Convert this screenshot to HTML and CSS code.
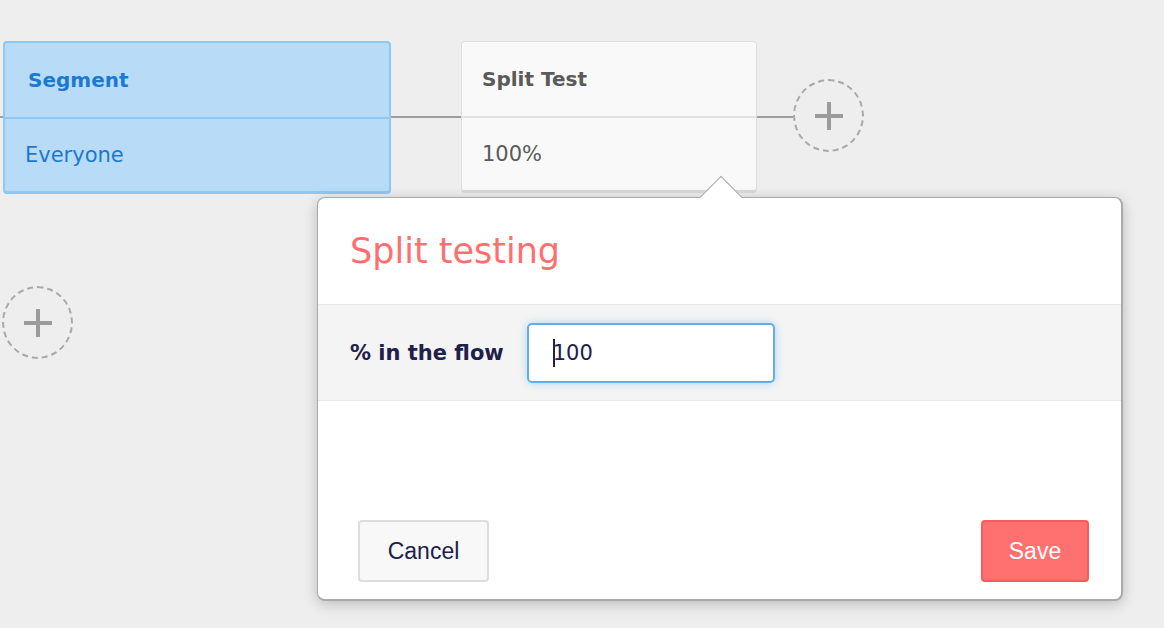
FILE: index.html
```html
<!DOCTYPE html>
<html>
<head>
<meta charset="utf-8">
<link rel="stylesheet" href="styles.css">
</head>
<body>
<div class="canvas">
  <div class="flow-row">
    <div class="line line-lead"></div>
    <div class="node node-segment">
      <div class="node-head">Segment</div>
      <div class="node-body">Everyone</div>
    </div>
    <div class="line line-mid"></div>
    <div class="node node-split">
      <div class="node-head">Split Test</div>
      <div class="node-body">100%</div>
    </div>
    <div class="line line-end"></div>
    <div class="add-btn add-btn-next">
      <svg viewBox="0 0 30 30" width="30" height="30"><path d="M15 1V29M1 15H29" stroke="#9b9b9b" stroke-width="4" fill="none"/></svg>
    </div>
  </div>
  <div class="add-btn add-btn-branch">
    <svg viewBox="0 0 30 30" width="30" height="30"><path d="M15 1V29M1 15H29" stroke="#9b9b9b" stroke-width="4" fill="none"/></svg>
  </div>

  <div class="popover">
    <div class="popover-arrow"></div>
    <div class="popover-title">Split testing</div>
    <div class="popover-field">
      <label class="field-label">% in the flow</label>
      <div class="field-input"><span class="caret"></span>100</div>
    </div>
    <div class="popover-footer">
      <button class="btn btn-cancel">Cancel</button>
      <button class="btn btn-save">Save</button>
    </div>
  </div>
</div>
</body>
</html>
```

FILE: styles.css
```css
html, body {
  margin: 0;
  padding: 0;
  background: #eeeeee;
  font-family: "DejaVu Sans", sans-serif;
}

.canvas {
  position: relative;
  width: 1164px;
  height: 628px;
  overflow: hidden;
}

.flow-row {
  display: flex;
  align-items: flex-start;
  padding-top: 41px;
}

.line {
  height: 2px;
  margin-top: 75px;
  background: #9d9d9d;
}
.line-lead { width: 3px; }
.line-mid { width: 70px; }
.line-end { width: 36px; }

.node {
  box-sizing: border-box;
  height: 153px;
  border-radius: 4px;
  display: flex;
  flex-direction: column;
}
.node-head {
  height: 74px;
  display: flex;
  align-items: center;
  font-weight: bold;
  font-size: 20px;
}
.node-body {
  flex: 1;
  display: flex;
  align-items: center;
  font-size: 21px;
}

.node-segment {
  width: 388px;
  background: #b8dcf7;
  border: 2px solid #8ec8f4;
  border-bottom-width: 3px;
  color: #1b79d1;
}
.node-segment .node-head {
  padding-left: 23px;
  border-bottom: 2px solid #8ec8f4;
}
.node-segment .node-body { padding-left: 20px; }

.node-split {
  width: 296px;
  height: 152px;
  background: #f9f9f9;
  border: 1px solid #dedede;
  border-bottom: 3px solid #dadada;
  color: #5a5a5a;
}
.node-split .node-head {
  padding-left: 20px;
  height: 74px;
  border-bottom: 2px solid #e2e2e2;
}
.node-split .node-body { padding-left: 20px; }

.add-btn {
  box-sizing: border-box;
  width: 71px;
  height: 73px;
  border: 2px dashed #a9a9a9;
  border-radius: 50%;
  display: flex;
  align-items: center;
  justify-content: center;
}
.add-btn-next {
  margin-top: 38px;
}
.add-btn-branch {
  margin-top: 92px;
  margin-left: 2px;
}

.popover {
  position: absolute;
  left: 317px;
  top: 197px;
  width: 806px;
  height: 404px;
  box-sizing: border-box;
  background: #ffffff;
  border: 1px solid #a9a9a9;
  border-right-width: 2px;
  border-bottom-width: 2px;
  border-radius: 8px;
  box-shadow: 0 3px 14px rgba(0, 0, 0, 0.22);
  display: flex;
  flex-direction: column;
}

.popover-arrow {
  position: absolute;
  left: 388px;
  top: -16px;
  width: 29px;
  height: 29px;
  background: #ffffff;
  border-top: 1px solid #a9a9a9;
  border-left: 1px solid #a9a9a9;
  transform: rotate(45deg);
}

.popover-title {
  height: 106px;
  display: flex;
  align-items: center;
  padding-left: 32px;
  font-size: 35px;
  color: #ff6f6f;
}

.popover-field {
  height: 95px;
  background: #f4f4f4;
  border-top: 1px solid #e8e8e8;
  border-bottom: 1px solid #e8e8e8;
  display: flex;
  align-items: center;
  padding-left: 32px;
  gap: 23px;
}

.field-label {
  font-weight: bold;
  font-size: 21px;
  color: #20204a;
}

.field-input {
  box-sizing: border-box;
  width: 248px;
  height: 60px;
  background: #ffffff;
  border: 2px solid #62aeea;
  border-radius: 5px;
  box-shadow: 0 0 8px rgba(98, 174, 234, 0.45);
  display: flex;
  align-items: center;
  padding-left: 24px;
  font-size: 21px;
  color: #20204a;
}
.caret {
  display: inline-block;
  width: 2px;
  height: 28px;
  background: #20204a;
  margin-right: -2px;
}

.popover-footer {
  flex: 1;
  display: flex;
  justify-content: space-between;
  align-items: flex-end;
  padding: 0 32px 17px 40px;
}

.btn {
  box-sizing: border-box;
  height: 62px;
  border-radius: 4px;
  font-family: "Liberation Sans", Arial, sans-serif;
  font-size: 23px;
  cursor: pointer;
}
.btn-cancel {
  width: 131px;
  background: #f8f8f8;
  border: 2px solid #dddddd;
  color: #20204a;
}
.btn-save {
  width: 108px;
  background: #ff7070;
  border: 2px solid #f65c5c;
  color: #ffffff;
}
```
